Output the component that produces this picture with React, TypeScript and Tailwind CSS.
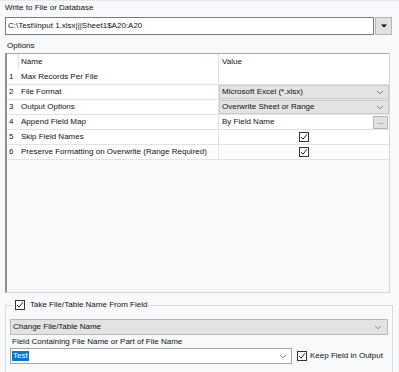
import React from "react";

const Chevron = () => (
  <svg width="8" height="5" viewBox="0 0 8 5" className="shrink-0">
    <path d="M1 1 L4 3.8 L7 1" fill="none" stroke="#7c7c7c" strokeWidth="0.9" />
  </svg>
);

const Check = () => (
  <span className="w-[10px] h-[10px] bg-white border border-[#333333] flex items-center justify-center shrink-0">
    <svg width="8" height="8" viewBox="0 0 8 8">
      <path d="M1 4 L3 6.2 L7 1.2" fill="none" stroke="#222" strokeWidth="1" />
    </svg>
  </span>
);

const rows: { n: number; name: string; kind: "empty" | "select" | "text" | "check"; value?: string }[] = [
  { n: 2, name: "File Format", kind: "select", value: "Microsoft Excel (*.xlsx)" },
  { n: 3, name: "Output Options", kind: "select", value: "Overwrite Sheet or Range" },
  { n: 4, name: "Append Field Map", kind: "text", value: "By Field Name" },
  { n: 5, name: "Skip Field Names", kind: "check" },
  { n: 6, name: "Preserve Formatting on Overwrite (Range Required)", kind: "check" },
];

export default function App() {
  return (
    <div
      className="w-[399px] h-[372px] overflow-hidden bg-[#f8f9fb] border-t border-[#e4e8ef] text-[8px] leading-[10px] text-[#111]"
      style={{ fontFamily: '"Liberation Sans", Arial, sans-serif' }}
    >
      <div className="pl-[5px] pt-[2px]">Write to File or Database</div>
      <div className="flex pl-[5px] mt-[4px]">
        <div className="w-[369px] h-[18px] bg-white border border-[#7a7a7a] flex items-center px-[2px]">
          C:\Test\Input 1.xlsx|||Sheet1$A20:A20
        </div>
        <div className="w-[17px] h-[18px] ml-[1px] bg-[#e1e1e1] border border-[#b5b5b5] flex items-center justify-center">
          <svg width="6" height="4" viewBox="0 0 6 4">
            <path d="M0 0.5 L6 0.5 L3 3.5 Z" fill="#000" />
          </svg>
        </div>
      </div>
      <div className="pl-[7px] mt-[6px]">Options</div>
      <div className="ml-[5px] mt-[2px] w-[385px] h-[240px] border-l-2 border-l-[#8f8f8f] border-t border-t-[#a8a8a8] border-r border-r-[#d6d6d6] border-b border-b-[#d6d6d6] flex flex-col">
        <div className="flex h-[16px] bg-white">
          <div className="w-[12px] border-r border-[#e0e0e0]" />
          <div className="w-[200px] border-r border-[#e0e0e0] pl-[2px] pt-[3px]">Name</div>
          <div className="flex-1 pl-[3px] pt-[3px]">Value</div>
        </div>
        <div className="flex h-[15px] bg-white border-b border-[#e3e3e3]">
          <div className="w-[12px] pl-[2px] flex items-center">1</div>
          <div className="w-[200px] border-r border-[#e0e0e0] pl-[2px] flex items-center">Max Records Per File</div>
          <div className="flex-1" />
        </div>
        {rows.map((r) => (
          <div key={r.n} className="flex h-[15px] bg-white border-b border-[#e3e3e3]">
            <div className="w-[12px] pl-[2px] flex items-center">{r.n}</div>
            <div className="w-[200px] border-r border-[#e0e0e0] pl-[2px] flex items-center whitespace-nowrap overflow-hidden">
              {r.name}
            </div>
            <div className="flex-1 flex items-center">
              {r.kind === "select" && (
                <div className="w-full h-full bg-[#e3e3e3] border border-[#cccccc] flex items-center justify-between pl-[2px] pr-[4px]">
                  <span>{r.value}</span>
                  <Chevron />
                </div>
              )}
              {r.kind === "text" && (
                <div className="w-full h-full flex items-center justify-between pl-[3px] pr-[1px]">
                  <span>{r.value}</span>
                  <span className="w-[15px] h-[13px] bg-[#e1e1e1] border border-[#b5b5b5] flex items-center justify-center text-[#555] leading-[6px]">
                    ...
                  </span>
                </div>
              )}
              {r.kind === "check" && (
                <div className="w-full flex justify-center">
                  <Check />
                </div>
              )}
            </div>
          </div>
        ))}
      </div>
      <fieldset className="ml-[5px] mt-[7px] w-[388px] border border-[#dcdcdc] px-[4px] pb-[10px]">
        <legend className="ml-[4px] px-[1px] flex items-center gap-[5px] leading-[10px]">
          <Check />
          <span>Take File/Table Name From Field</span>
        </legend>
        <div className="mt-[9px] h-[16px] bg-[#e3e3e3] border border-[#b9b9b9] flex items-center justify-between pl-[2px] pr-[5px]">
          <span>Change File/Table Name</span>
          <Chevron />
        </div>
        <div className="pl-[2px] mt-[2px]">Field Containing File Name or Part of File Name</div>
        <div className="flex items-center mt-[1px]">
          <div className="w-[282px] h-[16px] bg-white border border-[#a6a6a6] flex items-center justify-between pl-[1px] pr-[4px]">
            <span className="bg-[#0078d7] text-white px-[1px]">Test</span>
            <Chevron />
          </div>
          <div className="ml-[5px] flex items-center gap-[3px]">
            <Check />
            <span>Keep Field in Output</span>
          </div>
        </div>
      </fieldset>
    </div>
  );
}
